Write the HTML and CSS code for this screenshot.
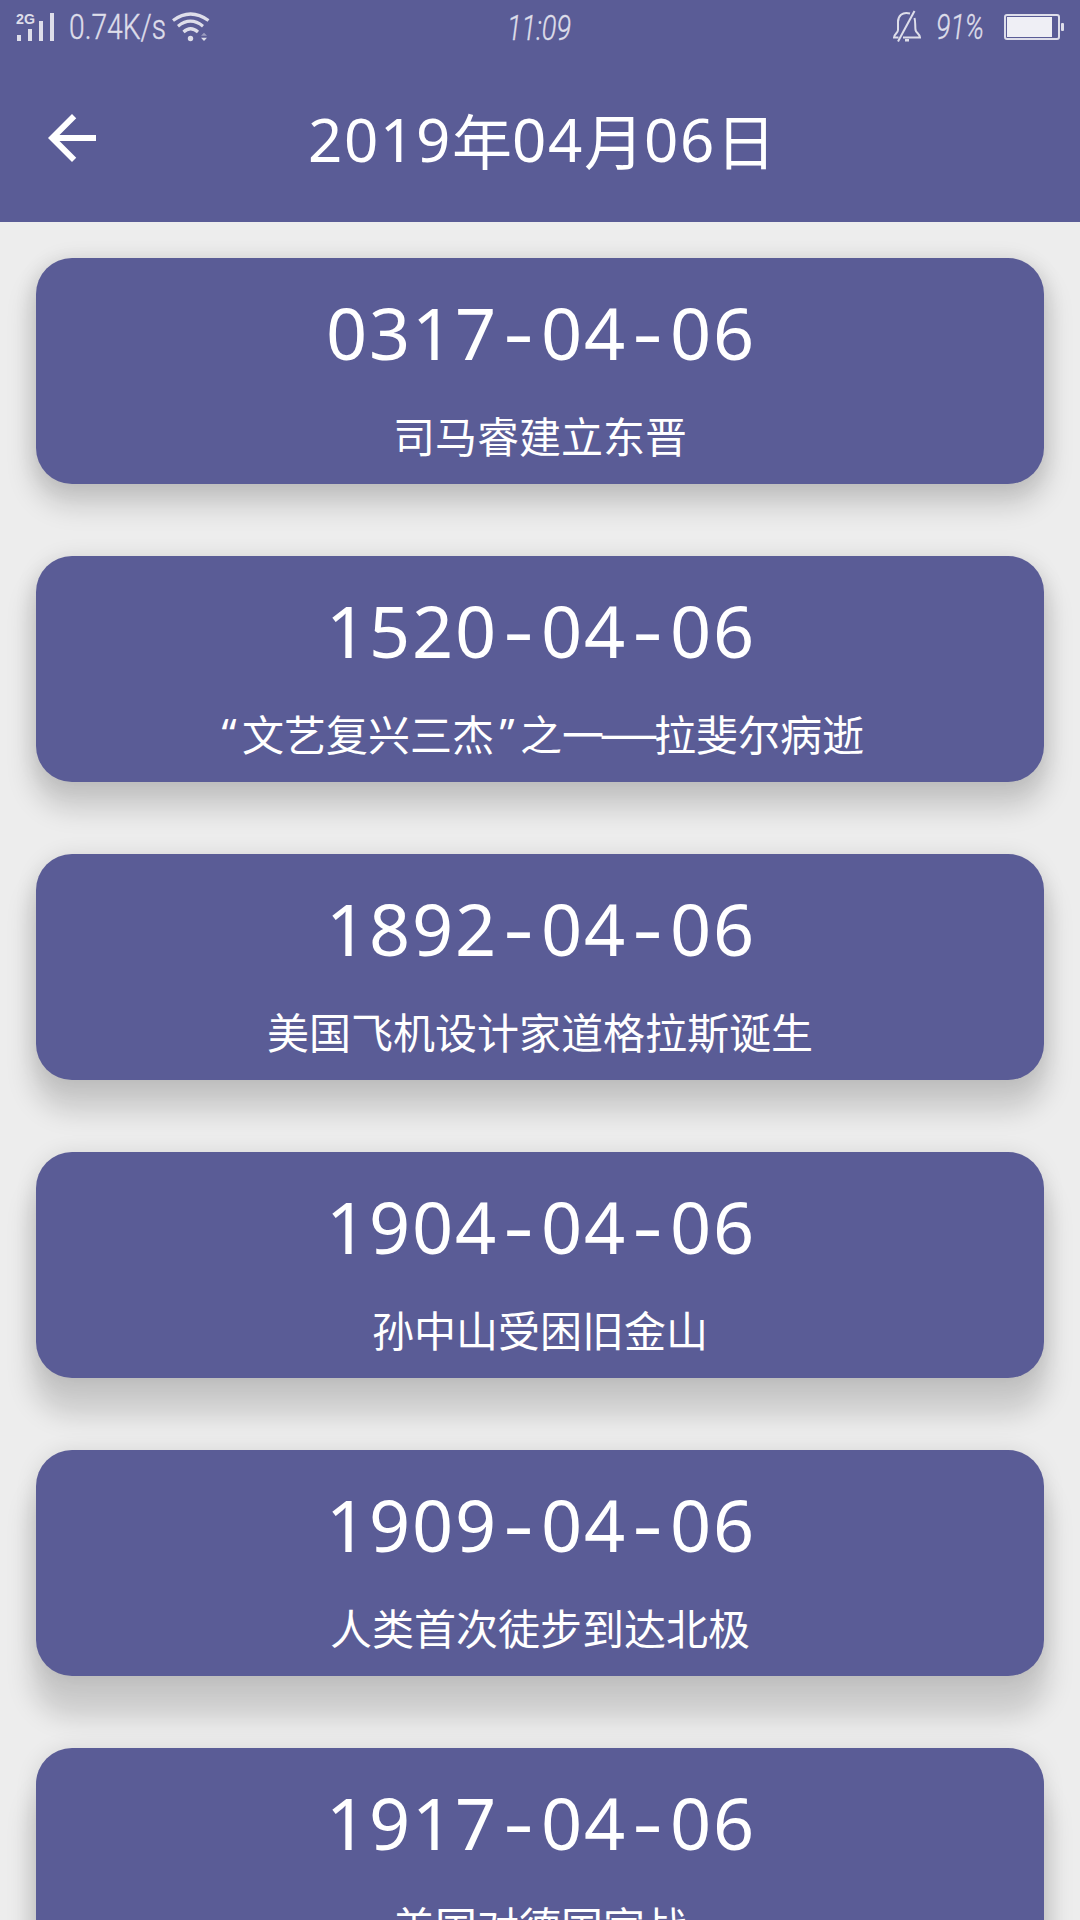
FILE: index.html
```html
<!DOCTYPE html>
<html lang="zh-CN">
<head>
<meta charset="utf-8">
<title>2019年04月06日</title>
<link rel="stylesheet" href="styles.css">
</head>
<body>
<div class="statusbar">
  <div class="status-left">
    <svg class="signal" width="40" height="38" viewBox="0 -4 40 38">
      <text class="network" x="0" y="11.500" textLength="19" lengthAdjust="spacingAndGlyphs">2G</text>
      <path d="M1 23h4v6h-4zM12 17h4v12h-4zM23 9h4v20h-4zM34 1h4v28h-4z"/>
    </svg>
    <svg class="speed" width="102" height="46" viewBox="-2 0 102 46"><text class="hand" x="0" y="35" textLength="97" lengthAdjust="spacingAndGlyphs">0.74K/s</text></svg>
    <svg class="wifi" width="38" height="30" viewBox="0 0 38 30">
      <g fill="none" stroke="currentColor" stroke-width="3.2">
        <path d="M1 8.500Q18.500 -4.500 36.500 8.500M6 14.200Q18.500 4.200 31 14.200M11.500 20Q18.500 13.500 26 20"/>
      </g>
      <circle cx="18.500" cy="26.500" r="2.700"/>
      <path d="M29 23.700l3-3 3 3z" opacity=".5"/><path d="M29 25.700h6l-3 3.200z"/>
    </svg>
  </div>
  <svg class="clock" width="76" height="46" viewBox="-5 0 76 46"><text class="hand slant" x="0" y="35.500" textLength="64" lengthAdjust="spacingAndGlyphs">11:09</text></svg>
  <div class="status-right">
    <svg class="bell" width="30" height="34" viewBox="0 0 30 34">
      <g fill="none" stroke="currentColor" stroke-width="2">
        <path d="M18 3.500C10 1.500 6 6 6 12V20C6 23 2 24 2 27.500H6.500M22.500 8C23.500 11 23 15 23.500 20C24 23 28 24 28 27.500H11"/>
        <path d="M22.500 1L6 31.500"/>
      </g>
      <path d="M13 29h4v2.500h-4z"/>
    </svg>
    <svg class="percent" width="58" height="46" viewBox="-3 0 58 46"><text class="hand slant" x="0" y="34.500" textLength="48" lengthAdjust="spacingAndGlyphs">91%</text></svg>
    <svg class="battery" width="60" height="26" viewBox="0 0 60 26">
      <rect x="1" y="1" width="54" height="24" rx="2" fill="none" stroke="currentColor" stroke-width="2"/>
      <rect class="charge" x="3" y="3" width="45" height="20"/>
      <rect x="57" y="9" width="3" height="8" rx="1"/>
    </svg>
  </div>
</div>
<header class="toolbar">
  <svg class="back" width="72" height="72" viewBox="0 0 24 24"><path d="M20 11H7.830l5.590-5.590L12 4l-8 8 8 8 1.410-1.410L7.830 13H20v-2z"/></svg>
  <h1 class="title">2019<span class="han">年</span>04<span class="han">月</span>06<span class="han">日</span></h1>
</header>
<main class="list">
  <article class="card s1"><div class="date">0317<i>-</i>04<i>-</i>06</div><div class="event">司马睿建立东晋</div></article>
  <article class="card s2"><div class="date">1520<i>-</i>04<i>-</i>06</div><div class="event"><span class="quote">“</span>文艺复兴三杰<span class="quote">”</span>之一<span class="dash">—</span>拉斐尔病逝</div></article>
  <article class="card s3"><div class="date">1892<i>-</i>04<i>-</i>06</div><div class="event">美国飞机设计家道格拉斯诞生</div></article>
  <article class="card s4"><div class="date">1904<i>-</i>04<i>-</i>06</div><div class="event">孙中山受困旧金山</div></article>
  <article class="card s5"><div class="date">1909<i>-</i>04<i>-</i>06</div><div class="event">人类首次徒步到达北极</div></article>
  <article class="card s6"><div class="date">1917<i>-</i>04<i>-</i>06</div><div class="event">美国对德国宣战</div></article>
</main>
</body>
</html>
```
FILE: styles.css
```css
* { box-sizing: border-box; }
body {
  margin: 0;
  width: 1080px;
  height: 1920px;
  overflow: hidden;
  display: flex;
  flex-direction: column;
  background: #ededed;
  color: #fff;
  font-family: "Noto Sans", "Noto Sans CJK SC", sans-serif;
}
svg { display: block; fill: currentColor; flex: none; overflow: visible; }

.statusbar {
  flex: none;
  height: 54px;
  padding: 0 16px;
  display: grid;
  grid-template-columns: 1fr 76px 1fr;
  align-items: center;
  background: #5a5c96;
  color: #dedeea;
}
.status-left, .status-right { display: flex; align-items: center; }
.status-right { justify-content: flex-end; }
.network { font: bold 14px "Liberation Sans", sans-serif; }
.hand { font: 300 35px Roboto, "Noto Sans", sans-serif; stroke: currentColor; stroke-width: .4px; }
.slant { font-style: italic; }
.speed { margin-left: 11px; }
.wifi { margin-left: 3px; }
.percent { margin: 0 13px 0 11px; }
.charge { fill: #efeff5; }

.toolbar {
  flex: none;
  height: 168px;
  padding: 0 36px;
  display: grid;
  grid-template-columns: 72px 1fr 72px;
  align-items: center;
  background: #5a5c96;
}
.title {
  margin: 0;
  padding: 4px 0 0 4px;
  display: flex;
  justify-content: center;
  font-size: 60px;
  font-weight: 400;
  line-height: 72px;
  letter-spacing: 1.7px;
}
.han { width: 60px; padding-top: 3px; letter-spacing: 0; }

.list {
  flex: none;
  padding: 36px 36px 0;
  display: flex;
  flex-direction: column;
  gap: 72px;
}
.card {
  height: 226px;
  padding-top: 32px;
  display: flex;
  flex-direction: column;
  align-items: center;
  gap: 36px;
  border-radius: 36px;
  background: #5a5c96;
}
.s1 { box-shadow: 0 2px 22px rgba(0,0,0,.11), 0 18px 26px 5px rgba(0,0,0,.145); }
.s2 { box-shadow: 0 2px 22px rgba(0,0,0,.11), 0 23px 26px 5px rgba(0,0,0,.145); }
.s3 { box-shadow: 0 2px 22px rgba(0,0,0,.11), 0 27px 26px 5px rgba(0,0,0,.145); }
.s4 { box-shadow: 0 2px 22px rgba(0,0,0,.11), 0 32px 26px 5px rgba(0,0,0,.145); }
.s5 { box-shadow: 0 2px 22px rgba(0,0,0,.11), 0 36px 26px 5px rgba(0,0,0,.145); }
.s6 { box-shadow: 0 2px 22px rgba(0,0,0,.11), 0 41px 26px 5px rgba(0,0,0,.145); }

.date {
  padding-left: 2px;
  display: flex;
  font-size: 72px;
  line-height: 84px;
  letter-spacing: 1.83px;
}
.date i {
  width: 43px;
  font-style: normal;
  letter-spacing: 0;
  text-align: center;
  transform: translate(-1px, -2px) scaleX(1.3);
}
.event {
  display: flex;
  font: 42px/50px "Noto Sans CJK SC", sans-serif;
  white-space: nowrap;
}
.quote { width: 26px; text-align: center; font-family: "Noto Sans", sans-serif; }
.dash { width: 50px; text-align: center; font-family: "Noto Sans", sans-serif; transform: scaleX(1.42); }
```
